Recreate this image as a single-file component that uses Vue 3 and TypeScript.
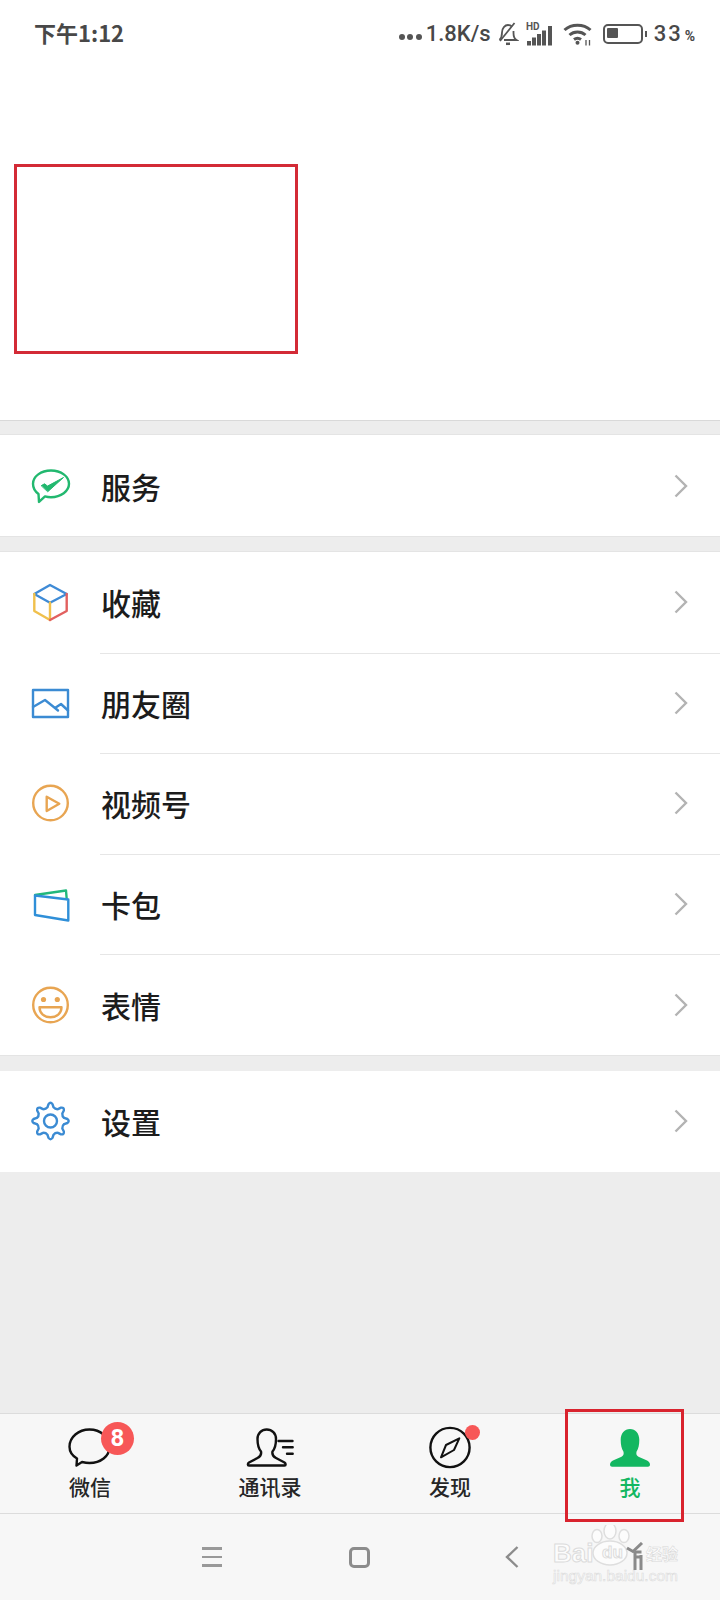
<script setup lang="ts">
const menuGroups = [
  [{ name: '服务', icon: 'pay' }],
  [
    { name: '收藏', icon: 'box' },
    { name: '朋友圈', icon: 'photo' },
    { name: '视频号', icon: 'video' },
    { name: '卡包', icon: 'card' },
    { name: '表情', icon: 'smile' },
  ],
  [{ name: '设置', icon: 'gear' }],
]

const tabs = [
  { name: '微信', icon: 'chat' },
  { name: '通讯录', icon: 'contacts' },
  { name: '发现', icon: 'compass' },
  { name: '我', icon: 'me' },
]

// gear outline, 8 rounded teeth with curved valleys
function makeGear(cx: number, cy: number, outer: number, inner: number, teeth: number) {
  const pts: string[] = []
  const step = (Math.PI * 2) / teeth
  const pos = (r: number, a: number) => `${(cx + r * Math.cos(a)).toFixed(2)} ${(cy + r * Math.sin(a)).toFixed(2)}`
  for (let i = 0; i < teeth; i++) {
    const a = i * step - Math.PI / 2
    const w = step * 0.15
    const v = step * 0.28
    if (i === 0) pts.push(`M${pos(inner, a - v)}`)
    pts.push(`L${pos(outer - 1.5, a - w)}`)
    pts.push(`Q${pos(outer + 1, a)} ${pos(outer - 1.5, a + w)}`)
    pts.push(`L${pos(inner, a + v)}`)
    pts.push(`Q${pos(inner - 1.5, a + step / 2)} ${pos(inner, a + step - v)}`)
  }
  return pts.join(' ') + 'Z'
}

const gearPath = makeGear(19.5, 20, 18.5, 14, 8)
</script>

<template>
  <div class="page">
    <div class="status">
      <span class="time">下午1:12</span>
      <div class="status-right">
        <span class="dots"><i></i><i></i><i></i></span>
        <span class="speed">1.8K/s</span>
        <svg class="s-bell" width="22" height="24" viewBox="0 0 22 24" fill="none" stroke="#555" stroke-width="1.800">
          <path d="M2.500 18c2-2 2.500-4 2.500-7.500C5 6 8 3 11 3c1.800 0 3 .6 4 1.700M16.500 9v2c0 3 .5 5.500 3 7H7" />
          <path d="M3 19L17.500 1" />
          <path d="M9 21.800h4" stroke-width="2.500" />
        </svg>
        <svg class="s-signal" width="28" height="24" viewBox="0 0 28 24">
          <text x="1" y="8" font-size="10" font-weight="700" font-family="Roboto, sans-serif" fill="#555">HD</text>
          <rect x="2" y="19" width="4" height="4.500" fill="#555" />
          <rect x="7" y="15.500" width="4" height="8" fill="#555" />
          <rect x="12" y="12" width="4" height="11.500" fill="#555" />
          <rect x="17" y="8.500" width="4" height="15" fill="#555" />
          <rect x="23" y="4" width="4" height="19.500" fill="#555" />
        </svg>
        <svg class="s-wifi" width="30" height="24" viewBox="0 0 30 24" fill="none" stroke="#555" stroke-width="3">
          <path d="M1.500 8C8.500 1.500 20.500 1.500 27.500 8" />
          <path d="M6.500 13c4.500-4 11.500-4 16 0" />
          <path d="M11 17.500c2-1.500 5-1.500 7 0" />
          <circle cx="14.500" cy="20.800" r="2" fill="#555" stroke="none" />
          <path d="M23 18v5.500M26.500 18v5.500" stroke-width="1.300" />
        </svg>
        <span class="battery"><span class="battery-fill"></span></span>
        <span class="battery-tip"></span>
        <span class="level">33</span>
        <span class="percent">%</span>
      </div>
    </div>

    <div class="profile">
      <div class="redact"></div>
    </div>

    <section v-for="(group, g) in menuGroups" :key="g" class="group">
      <div v-for="item in group" :key="item.name" class="row">
        <svg class="menu-icon" width="40" height="40" viewBox="0 0 40 40" fill="none" stroke-width="2.400" stroke-linejoin="round" stroke-linecap="round">
          <template v-if="item.icon === 'pay'">
            <path d="M7.500 28C4 25.500 2 21.800 2 17.800 2 10.400 10 4.500 20 4.500s18 5.900 18 13.300-8 13.400-18 13.400c-2 0-4.200-.3-6-.8l-6 5.500z" stroke="#22b86f" />
            <path d="M10.500 19.500l3-1.700 3 2.300L32.500 11.500 17 25.500z" fill="#22b86f" stroke="#22b86f" stroke-width="1" />
          </template>
          <template v-else-if="item.icon === 'box'">
            <path d="M3.300 12L19 3l16.700 9L19 20.700z" stroke="#3f8bd6" />
            <path d="M3.300 12v17L19 38V20.700" stroke="#f0c04c" />
            <path d="M35.700 12v17L19 38" stroke="#e2605f" />
          </template>
          <template v-else-if="item.icon === 'photo'">
            <rect x="2" y="7" width="35" height="27" stroke="#3b8bd3" />
            <path d="M2 24l12-7 10 8 6-4 7 6.500M24 25l3 2.500" stroke="#3b8bd3" />
          </template>
          <template v-else-if="item.icon === 'video'">
            <circle cx="19.500" cy="20" r="17.300" stroke="#e8a552" />
            <path d="M15.700 13.700L28.300 20.700 15.700 28z" stroke="#e8a552" />
          </template>
          <template v-else-if="item.icon === 'card'">
            <path d="M4 11l31-4.500.7 8.500" stroke="#22b87c" />
            <path d="M4 11.500l33.300 4v21L4 31z" stroke="#2f8fd8" />
          </template>
          <template v-else-if="item.icon === 'smile'">
            <circle cx="19.500" cy="20" r="17.300" stroke="#e8a552" />
            <circle cx="12.500" cy="14.500" r="2.600" fill="#e8a552" stroke="none" />
            <circle cx="26.300" cy="14.500" r="2.600" fill="#e8a552" stroke="none" />
            <path d="M8.500 22.300h22c0 6-5 10-11 10s-11-4-11-10z" stroke="#e8a552" />
          </template>
          <template v-else>
            <path :d="gearPath" stroke="#3b8bd3" />
            <circle cx="19.500" cy="20" r="6.500" stroke="#3b8bd3" />
          </template>
        </svg>
        <span class="row-name">{{ item.name }}</span>
        <svg class="chevron" width="14" height="24" viewBox="0 0 14 24" fill="none" stroke="#b3b3b3" stroke-width="2.400">
          <path d="M1.500 1.500L12 12 1.500 22.500" />
        </svg>
      </div>
    </section>

    <div class="spacer"></div>

    <nav class="tabbar">
      <div v-for="tab in tabs" :key="tab.name" class="tab" :class="{ active: tab.icon === 'me' }">
        <div class="tab-icon">
          <svg width="48" height="40" viewBox="0 0 48 40" fill="none" stroke="#111" stroke-width="2.400" stroke-linejoin="round" stroke-linecap="round">
            <template v-if="tab.icon === 'chat'">
              <path d="M11 30.500C6 27.500 3.500 23.300 3.500 18.700 3.500 9 12.500 1.500 23.500 1.500s20 7.500 20 17.200-9 16.300-20 16.300c-2.500 0-5-.4-7.500-1l-5.500 3.500z" />
            </template>
            <template v-else-if="tab.icon === 'contacts'">
              <path d="M3.500 37.500h35c1.500 0 1.500-2 0-3L30 30c-3-1.500-4-4-3.500-6.500 2.500-3 3.500-7.500 3.500-12.500 0-5.500-4-9.500-9.300-9.500-5.200 0-9.200 4-9.200 9.500 0 5 1 9.500 3.500 12.500.5 2.500-.5 5-3.500 6.500l-8.500 4.500c-1.500 1-1.500 3 0 3z" />
              <path d="M32.500 13h14M37 19.300h9.700M41 25.700h5.700" />
            </template>
            <template v-else-if="tab.icon === 'compass'">
              <circle cx="24" cy="19.500" r="19.600" />
              <path d="M33.300 10.300L28 22 15 29.300 20 17z" stroke-width="2" />
            </template>
            <template v-else>
              <path d="M4 36.500c0-2 1.500-3.500 3.500-4.300l8-3.500c2-1 2.500-3 2-5-2-3-2.800-7-2.800-12C14.700 5.500 18.500 1 24 1s9.300 4.500 9.300 10.700c0 5-.8 9-2.800 12-.5 2 0 4 2 5l8 3.500c2 .8 3.500 2.300 3.500 4.300 0 1.500-1 2.200-2 2.200H6c-1 0-2-.7-2-2.200z" fill="#13b761" stroke="none" />
            </template>
          </svg>
          <span v-if="tab.icon === 'chat'" class="badge">8</span>
          <span v-if="tab.icon === 'compass'" class="dot"></span>
        </div>
        <span class="tab-name">{{ tab.name }}</span>
      </div>
    </nav>

    <div class="navbar">
      <div class="nav-menu"><i></i><i></i><i></i></div>
      <div class="nav-home"></div>
      <svg class="nav-back" width="14" height="22" viewBox="0 0 14 22" fill="none" stroke="#8c8c8c" stroke-width="2.400">
        <path d="M12.500 1L2 11l10.500 10" />
      </svg>
    </div>

    <div class="mark-box"></div>
    <div class="watermark">
      <svg class="wm-paw" width="130" height="44" viewBox="0 0 130 44" fill="#fcfcfc" stroke="#dedede" stroke-width="1.500">
        <ellipse cx="44" cy="11" rx="5" ry="6.500" />
        <ellipse cx="57" cy="6" rx="6" ry="8" />
        <ellipse cx="71" cy="11" rx="5" ry="6.500" />
        <ellipse cx="57" cy="28" rx="17" ry="12" />
      </svg>
      <div class="wm-top">
        <span class="wm-bai">Bai</span>
        <span class="wm-du">du</span>
        <span class="wm-cn">经验</span>
      </div>
      <div class="wm-url">jingyan.baidu.com</div>
      <!-- the dark figure that sits on top of the watermark -->
      <svg class="wm-figure" width="20" height="28" viewBox="0 0 20 28" fill="none" stroke="#8a8a8a" stroke-width="3">
        <path d="M1 6l6 3.500L16 1" />
        <path d="M8.500 10h7M9 15h6" />
        <path d="M9 10v18M15 13v15" />
      </svg>
    </div>
  </div>
</template>

<style scoped>
.page {
  position: relative;
  width: 720px;
  height: 1600px;
  display: flex;
  flex-direction: column;
  background: #ededed;
  font-family: "Noto Sans CJK SC", "Noto Sans", sans-serif;
  color: #1a1a1a;
  overflow: hidden;
}

.status {
  height: 66px;
  flex: none;
  display: flex;
  align-items: center;
  justify-content: space-between;
  background: #fff;
  color: #484848;
  padding: 0 25px 0 34px;
  box-sizing: border-box;
}

.time {
  font-size: 22px;
  font-weight: 700;
  margin-top: -3px;
}

.status-right {
  display: flex;
  align-items: center;
  margin-top: 1px;
}

.dots {
  display: flex;
  gap: 2.500px;
  margin-right: 4px;
  margin-top: 7px;
}

.dots i {
  width: 6px;
  height: 6px;
  border-radius: 50%;
  background: #555;
}

.speed {
  font-family: Roboto, sans-serif;
  font-size: 22px;
  font-weight: 500;
  margin-right: 6px;
}

.s-signal {
  margin: 0 10px 0 6px;
}

.s-wifi {
  margin-right: 10px;
}

.battery {
  width: 40px;
  height: 20px;
  border: 2.500px solid #555;
  border-radius: 5px;
  box-sizing: border-box;
  padding: 2.500px;
}

.battery-fill {
  display: block;
  width: 11px;
  height: 10px;
  background: #555;
  border-radius: 1px;
}

.battery-tip {
  width: 2px;
  height: 6px;
  margin: 0 7px 0 2px;
  background: #555;
}

.level {
  font-family: Roboto, sans-serif;
  font-size: 22px;
  font-weight: 500;
  letter-spacing: 2px;
}

.percent {
  font-family: Roboto, sans-serif;
  font-size: 14px;
  font-weight: 700;
  margin: 5px 0 0 2px;
}

.profile {
  height: 355px;
  flex: none;
  background: #fff;
  border-bottom: 1px solid #d9d9d9;
  box-sizing: border-box;
  padding: 98px 0 0 14px;
}

.redact {
  width: 284px;
  height: 190px;
  border: 3px solid #d32a36;
  box-sizing: border-box;
}

.group {
  flex: none;
  background: #fff;
  margin-top: 14px;
}

.group + .group {
  margin-top: 16px;
}

.group:not(:last-of-type) {
  box-shadow: 0 0 0 1px #e4e4e4;
}

.row {
  position: relative;
  height: 100.600px;
  display: flex;
  align-items: center;
  padding: 0 32px 0 31px;
}

.group:first-of-type .row {
  height: 101px;
  padding-top: 1px;
  box-sizing: border-box;
}

.row + .row::before {
  content: "";
  position: absolute;
  left: 100px;
  right: 0;
  top: 0;
  height: 1px;
  background: #e6e6e6;
}

.menu-icon {
  flex: none;
  margin-right: 30px;
}

.row-name {
  flex: 1;
  font-size: 30px;
  font-weight: 500;
  color: #1c1c1c;
}

.spacer {
  flex: 1;
}

.tabbar {
  flex: none;
  height: 101px;
  display: grid;
  grid-template-columns: repeat(4, 1fr);
  background: #f7f7f7;
  border-top: 1px solid #dcdcdc;
  border-bottom: 1px solid #dcdcdc;
  box-sizing: border-box;
}

.tab {
  display: flex;
  flex-direction: column;
  align-items: center;
  padding-top: 14px;
}

.tab-icon {
  position: relative;
  width: 48px;
  height: 40px;
}

.tab-icon svg {
  overflow: visible;
}

.tab-name {
  margin-top: 3px;
  font-size: 21px;
  line-height: 30px;
  font-weight: 500;
  color: #262626;
}

.tab.active .tab-name {
  color: #13b761;
}

.badge {
  position: absolute;
  left: 35px;
  top: -6px;
  width: 33px;
  height: 33px;
  border-radius: 50%;
  background: #f75757;
  color: #fff;
  font-family: Roboto, sans-serif;
  font-size: 24px;
  font-weight: 700;
  line-height: 33px;
  text-align: center;
}

.dot {
  position: absolute;
  left: 39px;
  top: -3px;
  width: 15px;
  height: 15px;
  border-radius: 50%;
  background: #f75757;
}

.navbar {
  flex: none;
  height: 86px;
  display: flex;
  align-items: center;
  background: #f7f7f7;
  padding: 0 0 0 202px;
}

.nav-menu {
  width: 20px;
  display: flex;
  flex-direction: column;
  gap: 6px;
}

.nav-menu i {
  height: 2.500px;
  background: #999;
}

.nav-home {
  width: 21px;
  height: 21px;
  margin-left: 127px;
  border: 3px solid #8c8c8c;
  border-radius: 5px;
  box-sizing: border-box;
}

.nav-back {
  margin-left: 135px;
}

.mark-box {
  position: absolute;
  left: 565px;
  top: 1409px;
  width: 119px;
  height: 113px;
  border: 3px solid #d9232e;
  box-sizing: border-box;
}

.watermark {
  position: absolute;
  left: 553px;
  top: 1525px;
  width: 130px;
  height: 62px;
  font-family: "Liberation Sans", sans-serif;
  color: #fcfcfc;
  -webkit-text-stroke: 1px #dcdcdc;
}

.wm-paw {
  position: absolute;
  left: 0;
  top: 0;
}

.wm-top {
  position: relative;
  display: flex;
  align-items: center;
  height: 28px;
  margin-top: 14px;
  font-weight: 700;
}

.wm-bai {
  font-size: 26px;
  width: 49px;
}

.wm-du {
  font-size: 17px;
  width: 44px;
}

.wm-cn {
  font-family: "Noto Sans CJK SC", sans-serif;
  font-size: 16px;
  -webkit-text-stroke: 0.5px #d6d6d6;
}

.wm-url {
  position: relative;
  font-size: 15.500px;
  line-height: 18px;
  margin-top: 0;
  white-space: nowrap;
  -webkit-text-stroke: 0.6px #dcdcdc;
}

.wm-figure {
  position: absolute;
  left: 73px;
  top: 17px;
}
</style>
